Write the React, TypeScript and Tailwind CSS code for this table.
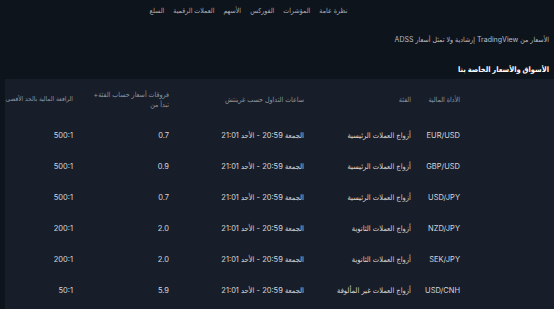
const nav = ['نظرة عامة', 'المؤشرات', 'الفوركس', 'الأسهم', 'العملات الرقمية', 'السلع'];

const rows = [
  { pair: 'EUR/USD', cat: 'أزواج العملات الرئيسية', spread: '0.7', lev: '500:1' },
  { pair: 'GBP/USD', cat: 'أزواج العملات الرئيسية', spread: '0.9', lev: '500:1' },
  { pair: 'USD/JPY', cat: 'أزواج العملات الرئيسية', spread: '0.7', lev: '500:1' },
  { pair: 'NZD/JPY', cat: 'أزواج العملات الثانوية', spread: '2.0', lev: '200:1' },
  { pair: 'SEK/JPY', cat: 'أزواج العملات الثانوية', spread: '2.0', lev: '200:1' },
  { pair: 'USD/CNH', cat: 'أزواج العملات غير المألوفة', spread: '5.9', lev: '50:1' },
];

export default function App() {
  return (
    <div
      dir="rtl"
      className="w-[554px] h-[309px] overflow-hidden bg-[#0e141b] text-[7.5px] leading-none"
      style={{ fontFamily: 'Inter, "DejaVu Sans Condensed", "DejaVu Sans", sans-serif' }}
    >
      <nav className="flex justify-center gap-[9px] pt-[7px] pr-[57px] text-[7px] text-[#a9b0ba]">
        {nav.map((n) => (
          <span key={n}>{n}</span>
        ))}
      </nav>

      <p className="mt-[22px] pr-[5px] text-[7px] text-[#b8bec7]">
        الأسعار من TradingView إرشادية ولا تمثل أسعار ADSS
      </p>

      <h2 className="mt-[23px] pr-[5px] text-[7.5px] font-bold text-white">الأسواق والأسعار الخاصة بنا</h2>

      <div className="mt-[5px] w-[549px] bg-[#171e29] pr-[94px]">
        <div className="flex h-[42px] items-center text-[7px] text-[#8d96a2] whitespace-nowrap">
          <div className="w-[49px] shrink-0">الأداة المالية</div>
          <div className="w-[107px] shrink-0">الفئة</div>
          <div className="w-[135px] shrink-0">ساعات التداول حسب غرينتش</div>
          <div className="w-[96px] shrink-0 leading-[10px]">
            فروقات أسعار حساب الفئة+
            <br />
            تبدأ من
          </div>
          <div className="w-[68px] shrink-0 text-[6.5px]">الرافعة المالية بالحد الأقصى</div>
        </div>
        {rows.map((r) => (
          <div key={r.pair} className="flex h-[31px] items-center text-[#d3d7dd] whitespace-nowrap">
            <div className="w-[49px] shrink-0">{r.pair}</div>
            <div className="w-[107px] shrink-0">{r.cat}</div>
            <div className="w-[135px] shrink-0">الجمعة 20:59 - الأحد 21:01</div>
            <div className="w-[96px] shrink-0">{r.spread}</div>
            <div className="w-[68px] shrink-0">{r.lev}</div>
          </div>
        ))}
        <div className="h-[20px]" />
      </div>
    </div>
  );
}
